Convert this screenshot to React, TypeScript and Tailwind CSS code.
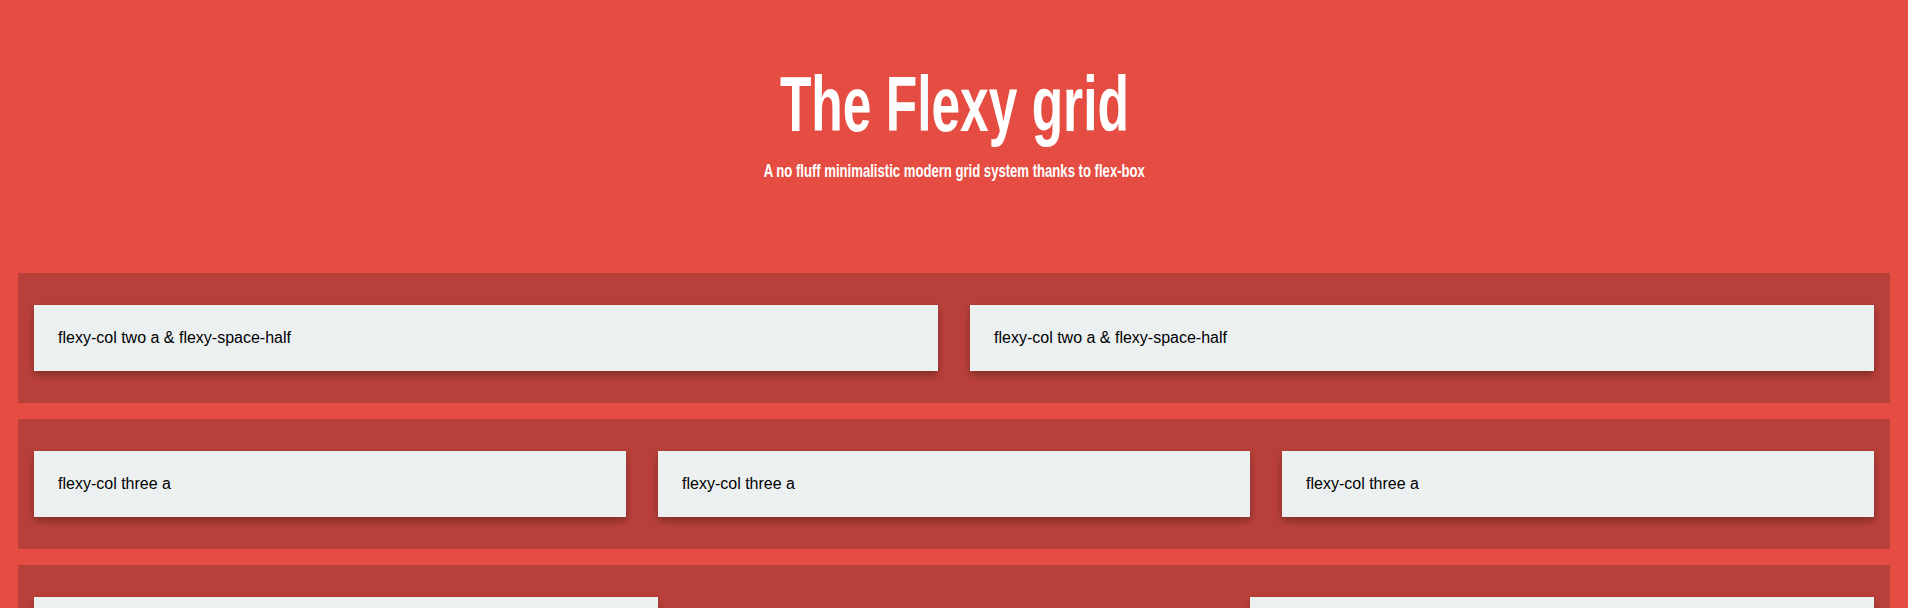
export default function App() {
  const half = 'flexy-col two a & flexy-space-half';
  const third = 'flexy-col three a';

  return (
    <div className="min-h-screen bg-[#e54d42] pb-10">
      {/* Header */}
      <header className="pt-[62px] pb-[90px] text-center text-white">
        <h1 className="font-['Liberation_Sans',Arial,sans-serif] font-bold text-[78px] leading-[84px]">
          <span className="inline-block scale-x-[0.66]">The Flexy grid</span>
        </h1>
        <p className="mt-[13px] font-['Liberation_Sans',Arial,sans-serif] font-bold text-[19px] leading-[24px]">
          <span className="inline-block scale-x-[0.69]">A no fluff minimalistic modern grid system thanks to flex-box</span>
        </p>
      </header>

      {/* Rows */}
      <div className="mx-[18px] flex flex-col gap-4">
        <Row>
          <Card className="w-[904px]">{half}</Card>
          <Card className="w-[904px]">{half}</Card>
        </Row>
        <Row>
          <Card className="w-[592px]">{third}</Card>
          <Card className="w-[592px]">{third}</Card>
          <Card className="w-[592px]">{third}</Card>
        </Row>
        <Row>
          <Card className="w-[624px]">{third}</Card>
          <Card className="w-[624px]">{third}</Card>
        </Row>
      </div>
    </div>
  );
}

function Row({ children }: { children: React.ReactNode }) {
  return (
    <div className="bg-[#b9403a] px-4 py-8 flex justify-between">
      {children}
    </div>
  );
}

function Card({ children, className }: { children: React.ReactNode; className: string }) {
  return (
    <div
      className={`${className} h-[66px] flex items-center px-6 bg-[#ecf0f1] text-black text-[16px] font-['Liberation_Sans',Arial,sans-serif] shadow-[0_4px_8px_rgba(0,0,0,0.3)]`}
    >
      {children}
    </div>
  );
}
